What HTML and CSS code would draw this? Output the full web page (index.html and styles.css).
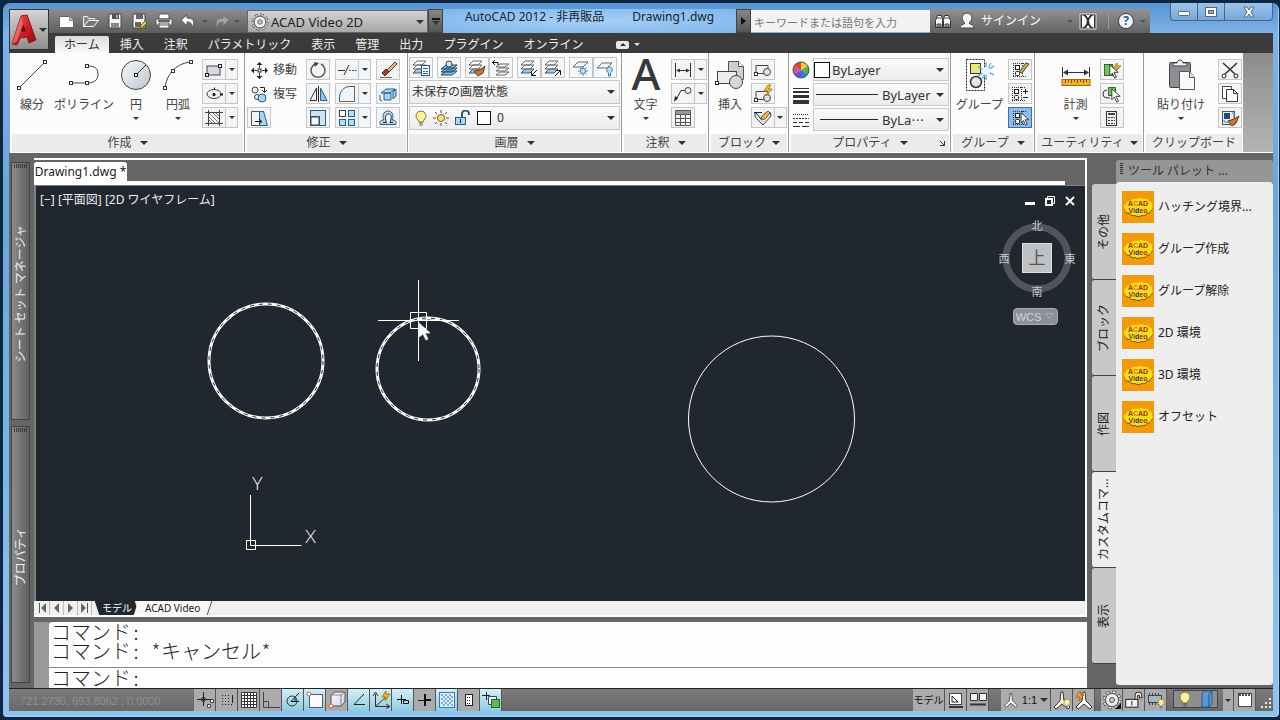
FILE: index.html
```html
<!DOCTYPE html>
<html lang="ja">
<head>
<meta charset="utf-8">
<title>AutoCAD 2012 - Drawing1.dwg</title>
<link rel="stylesheet" href="styles.css">
</head>
<body>
<svg class="defs" width="0" height="0" aria-hidden="true">
  <defs>
    <linearGradient id="gRed" x1="0" y1="0" x2="1" y2="1"><stop offset="0" stop-color="#f0605a"/><stop offset="0.5" stop-color="#d4202a"/><stop offset="1" stop-color="#8c0a12"/></linearGradient>
    <linearGradient id="gDisc" x1="0" y1="0" x2="1" y2="1"><stop offset="0" stop-color="#fafbfc"/><stop offset="1" stop-color="#bcc4cc"/></linearGradient>
    <linearGradient id="gCube" x1="0" y1="0" x2="1" y2="1"><stop offset="0" stop-color="#ffffff"/><stop offset="1" stop-color="#c9d3dc"/></linearGradient>
    <symbol id="tile" viewBox="0 0 32 32">
      <rect width="32" height="32" fill="#f39a0b"/>
      <path id="blob" d="M2 17q-1-3 2-4q0-3 4-3q2-3 7-2q4-2 7 0q4-1 5 2q4 1 3 4q2 3-1 5q-1 3-4 3q-2 3-5 2q-4 2-7 0q-4 1-5-2q-5 0-6-5z" fill="#7a5a00" transform="translate(0 1)"/>
      <path d="M2 17q-1-3 2-4q0-3 4-3q2-3 7-2q4-2 7 0q4-1 5 2q4 1 3 4q2 3-1 5q-1 3-4 3q-2 3-5 2q-4 2-7 0q-4 1-5-2q-5 0-6-5z" fill="#f8dc14"/>
      <text x="16" y="15" class="tile-text" fill="#a0301c">A<tspan fill="#d8782a">C</tspan>AD</text>
      <text x="16" y="22" class="tile-text" fill="#a02c2c">V<tspan fill="#4a6a30">i</tspan><tspan fill="#28286c">d</tspan>eo</text>
    </symbol>
    <symbol id="bulb" viewBox="0 0 16 16"><path d="M8 1a5 5 0 0 1 3 9l-1 2H6l-1-2a5 5 0 0 1 3-9z" fill="#fff0a0" stroke="#8a7430"/><path d="M6 13h4M6.500 15h3" stroke="#555"/></symbol>
    <symbol id="lock" viewBox="0 0 18 16"><path d="M10 7V4a3 3 0 0 1 6 0v2h-2V4.500a1 1 0 0 0-2 0V7" fill="#fff" stroke="#333"/><rect x="1.500" y="7.500" width="11" height="7" fill="#f4f4f4" stroke="#333"/><path d="M7 9v4" stroke="#333"/></symbol>
    <symbol id="layers" viewBox="0 0 24 20"><path d="M4 7l4-4h9l-4 4zM4 11l4-4h9l-4 4z" fill="#fff" stroke="#666"/><path d="M4 15l4-4h9l-4 4z" fill="#9cc8e6" stroke="#456"/></symbol>
    <symbol id="scale" viewBox="0 0 20 20"><path d="M9 2h2l1 9 6 6-2 2-6-5-6 5-2-2 6-6z" fill="#fff" stroke="#333"/></symbol>
    <symbol id="gear" viewBox="0 0 20 20"><circle cx="10" cy="10" r="8" fill="none" stroke="#555" stroke-width="3" stroke-dasharray="3.600 2.680"/><circle cx="10" cy="10" r="8" fill="none" stroke="#eee" stroke-width="1.500" stroke-dasharray="2.400 3.880" stroke-dashoffset="-.6"/><circle cx="10" cy="10" r="6.500" fill="#f0f0f0" stroke="#555"/><circle cx="10" cy="10" r="2.500" fill="#ccc" stroke="#555"/></symbol>
    <symbol id="cursor" viewBox="0 0 12 18"><path d="M1 1v13l3-3 3 6 2-1-3-6h5z" fill="#fff" stroke="#222"/></symbol>
    <symbol id="blockpair" viewBox="0 0 24 20"><path d="M5 5.500h12v8H5z" fill="#f4f4f4" stroke="#444"/><rect x="3.500" y="12.500" width="3" height="3" fill="#fff" stroke="#333"/><circle cx="16" cy="12" r="3.500" fill="#dde1e4" stroke="#444"/></symbol>
    <symbol id="group" viewBox="0 0 24 20"><path d="M5 3.500h13M5 16.500h13M5.500 3v14M14.500 3v14" fill="none" stroke="#333" stroke-dasharray="1 1"/><rect x="7.500" y="5.500" width="4" height="4" fill="#fff" stroke="#222"/><rect x="7.500" y="11.500" width="4" height="4" rx="1" fill="#fff" stroke="#222"/></symbol>
  </defs>
</svg>

<div class="window">
  <header class="header">
    <button class="app-btn" aria-label="アプリケーション メニュー">
      <svg width="26" height="36" viewBox="0 0 26 36"><path d="M10 4l6-1 9 25-7 3-2-6-7 1-3 7-5-1z" fill="url(#gRed)" stroke="#9c1018"/><path d="M12 12l3 7-5 1z" fill="#6c0a10"/><path d="M10 4L1 32l5-3 6-17z" fill="#f58a84" opacity=".6"/></svg>
      <i class="dn"></i>
    </button>
    <div class="titlebar">
      <div class="qat">
        <button aria-label="新規"><svg width="20" height="18"><path d="M2.500 4.500h10l4 4v7h-14z" fill="#fff" stroke="#666"/><path d="M12.500 4.500v4h4" fill="#ccc" stroke="#888"/></svg></button>
        <button aria-label="開く"><svg width="20" height="18"><path d="M2.500 14.500v-10h4l1 2h6v2" fill="#888" stroke="#eee"/><path d="M2.500 14.500l5-6h10l-5 6z" fill="#777" stroke="#fff"/></svg></button>
        <button aria-label="上書き保存"><svg width="20" height="18"><path d="M4 2h12v14H4z" fill="#f4f4f4" stroke="#444"/><path d="M7 2h7v5H7z" fill="#555"/><path d="M6 11h8v5H6z" fill="#888"/><path d="M12 3v3" stroke="#fff"/></svg></button>
        <button aria-label="名前を付けて保存"><svg width="20" height="18"><path d="M4 2h12v14H4z" fill="#f4f4f4" stroke="#444"/><path d="M7 2h7v5H7zM6 10h6v5H6z" fill="#666"/><path d="M11 17l1-4 4-4 2 2-4 4z" fill="#f2cc40" stroke="#705810"/></svg></button>
        <button aria-label="印刷"><svg width="22" height="18"><path d="M6 2h10v5H6zM3 7h16v6H3zM6 11h10v5H6z" fill="#fff" stroke="#555"/><path d="M5 9h12" stroke="#666" stroke-width="2"/></svg></button>
        <button aria-label="元に戻す"><svg width="20" height="18"><path d="M2 8l6-5v3c6 0 8 3 6 10-1-4-2-6-6-6v4z" fill="#fff" stroke="#555"/></svg></button>
        <i class="dn sm"></i>
        <button aria-label="やり直し"><svg width="20" height="18"><path d="M18 8l-6-5v3c-6 0-8 3-6 10 1-4 2-6 6-6v4z" fill="#a4a4a4" stroke="#777"/></svg></button>
        <i class="dn sm"></i>
      </div>
      <div class="workspace">
        <svg width="18" height="18"><use href="#gear"/></svg>
        <select aria-label="ワークスペース"><option>ACAD Video 2D</option></select>
        <i class="dn"></i>
      </div>
      <button class="qat-more" aria-label="カスタマイズ"><i class="bar"></i><i class="dn dark"></i></button>
      <h1 class="title"><span>AutoCAD 2012 - 非再販品</span><span>Drawing1.dwg</span></h1>
      <button class="qat-more" aria-label="検索を表示"><i class="rt"></i></button>
      <input class="search" type="text" aria-label="検索" placeholder="キーワードまたは語句を入力">
      <div class="info">
        <button aria-label="検索"><svg width="18" height="18"><path d="M3.500 3.500h4l1 5v7h-7v-7zM10.500 3.500h4l2 5v7h-7v-7z" fill="#fff" stroke="#333"/><path d="M3 6h4M11 6h4M3 12h4v3H3zM11 12h4v3h-4z" fill="#999" stroke="#444"/></svg></button>
        <button class="signin"><svg width="18" height="18"><path d="M2 16c0-4 4-3 5-5-5-4-3-10 2-10s7 6 2 10c1 2 5 1 5 5z" fill="#f4f4f4" stroke="#444"/></svg>サインイン</button>
        <i class="dn sm"></i>
        <button aria-label="Exchange"><svg width="18" height="18"><rect x="1" y="2" width="16" height="15" fill="#333" stroke="#ddd"/><path d="M3 3c7 3 6 10 0 13zM15 3c-7 3-6 10 0 13zM7 3h4L9 6zM7 16h4l-2-3z" fill="#fff"/></svg></button>
        <i class="split"></i>
        <button aria-label="ヘルプ" class="help">?</button>
        <i class="dn sm"></i>
      </div>
      <div class="winbtns">
        <button aria-label="最小化"><svg width="12" height="12"><rect x=".5" y="5.500" width="11" height="4" rx="1" fill="#fff" stroke="#54687e"/></svg></button>
        <button aria-label="元のサイズに戻す"><svg width="12" height="12"><rect x=".5" y="1.500" width="11" height="9" fill="#fff" stroke="#54687e"/><rect x="3.500" y="4.500" width="5" height="3" fill="#8ab0d8" stroke="#54687e"/></svg></button>
        <button aria-label="閉じる"><svg width="14" height="12"><path d="M2 1h3l2 3 2-3h3L9 6l3 5H9L7 8l-2 3H2l3-5z" fill="#fff" stroke="#54687e"/></svg></button>
      </div>
    </div>
    <nav class="tabs">
      <button class="active">ホーム</button><button>挿入</button><button>注釈</button><button>パラメトリック</button><button>表示</button><button>管理</button><button>出力</button><button>プラグイン</button><button>オンライン</button>
      <span class="collapse"><svg width="14" height="9"><rect width="13" height="8" y="1" rx="2" fill="#e8e8e8"/><path d="M4 6l3-3 3 3z" fill="#333"/></svg><i class="dn sm light"></i></span>
    </nav>
  </header>

  <main class="ribbon">
    <section class="panel p-draw">
      <div class="pbody">
        <button class="big w40"><svg width="32" height="32"><path d="M3 29L29 3" stroke="#444"/><g fill="#fff" stroke="#333"><rect x="1.500" y="27.500" width="3" height="3"/><rect x="27.500" y="1.500" width="3" height="3"/></g></svg><span>線分</span></button>
        <button class="big w64"><svg width="32" height="32"><path d="M3 24h16c6 0 11-2 11-9s-5-8-11-8" fill="none" stroke="#444"/><g fill="#fff" stroke="#333"><rect x="1.500" y="22.500" width="3" height="3"/><rect x="17.500" y="22.500" width="3" height="3"/><rect x="17.500" y="5.500" width="3" height="3"/></g></svg><span>ポリライン</span></button>
        <button class="big w40"><svg width="32" height="32"><circle cx="16" cy="16" r="14.500" fill="url(#gDisc)" stroke="#444"/><path d="M16 16L26 6" stroke="#333"/><rect x="14.500" y="14.500" width="3" height="3" fill="#fff" stroke="#222"/></svg><span>円</span><i class="dn sm dark"></i></button>
        <button class="big w44"><svg width="32" height="32"><path d="M3 29C4 17 13 4 29 3" fill="none" stroke="#444"/><g fill="#fff" stroke="#333"><rect x="1.500" y="27.500" width="3" height="3"/><rect x="9.500" y="10.500" width="3" height="3"/><rect x="27.500" y="1.500" width="3" height="3"/></g></svg><span>円弧</span><i class="dn sm dark"></i></button>
        <div class="col">
          <button class="ib sp" aria-label="長方形"><svg width="24" height="20"><rect x="5" y="6" width="13" height="9" fill="#d7dbdf" stroke="#444"/><g fill="#fff" stroke="#222"><rect x="3.500" y="13.500" width="3" height="3"/><rect x="16.500" y="4.500" width="3" height="3"/></g></svg><i class="dn sm dark"></i></button>
          <button class="ib sp" aria-label="楕円"><svg width="24" height="20"><ellipse cx="12" cy="10" rx="7" ry="4.500" fill="#eceeef" stroke="#444"/><path d="M10.500 10.500h3M12 9v3M18 10.500h3M12 4.500h1" stroke="#222" stroke-width="2"/></svg><i class="dn sm dark"></i></button>
          <button class="ib sp" aria-label="ハッチング"><svg width="24" height="20"><path d="M6.500 2v16M17.500 2v16M3 4.500h18M3 15.500h18" stroke="#444"/><path d="M7 9l6 6M7 5l10 10M11 5l6 6M14 5l3 3M7 12l3 3" stroke="#777"/></svg><i class="dn sm dark"></i></button>
        </div>
      </div>
      <footer>作成 <i class="dn dark"></i></footer>
    </section>

    <section class="panel p-modify">
      <div class="pbody mgrid">
        <button class="txt"><svg width="20" height="20"><path d="M10.500 4v4M10.500 13v4M4 10.500h4M13 10.500h4" stroke="#333"/><path d="M10.500 2l3 3h-6zM10.500 19l3-3h-6zM2 10.500l3-3v6zM19 10.500l-3-3v6z" fill="#222"/><rect x="9" y="9" width="3" height="3" fill="#fff" stroke="#222"/></svg>移動</button>
        <button class="ib" aria-label="回転"><svg width="24" height="20"><path d="M9 4a7 7 0 1 0 6 0" fill="none" stroke="#555" stroke-width="1.500"/><path d="M8 2l5 1-4 4z" fill="#444"/></svg></button>
        <button class="ib sp" aria-label="トリム"><svg width="24" height="20"><path d="M3 10.500h7M9 15l5-10" stroke="#333"/><path d="M14 10.500h8" stroke="#2a6a9c" stroke-dasharray="2 1"/></svg><i class="dn sm dark"></i></button>
        <button class="ib" aria-label="削除"><svg width="24" height="20"><path d="M11 10l8-8 2 2-8 8z" fill="#e8b878" stroke="#444"/><path d="M6 13l4-4 3 3-4 4z" fill="#b43a2c" stroke="#522"/><path d="M4 17.500h12" stroke="#666"/></svg></button>

        <button class="txt"><svg width="20" height="20"><circle cx="6" cy="6" r="3" fill="#eee" stroke="#444"/><circle cx="8" cy="13" r="2.500" fill="#eee" stroke="#444"/><circle cx="13" cy="14" r="4" fill="#a8d4f0" stroke="#23608e"/><path d="M11 3.500h4.500V8M13 6l2.500 2.500L18 6" fill="none" stroke="#222"/></svg>複写</button>
        <button class="ib" aria-label="鏡像"><svg width="24" height="20"><path d="M10.500 4v12.500H4z" fill="#eee" stroke="#333"/><path d="M14.500 4v12.500H21z" fill="#8cc4ec" stroke="#23608e"/><path d="M12.500 2v16" stroke="#222"/></svg></button>
        <button class="ib sp" aria-label="フィレット"><svg width="24" height="20"><path d="M4 17.500V13C5 7 9 3 14 2.500h5.500v15z" fill="#eef6fb"/><path d="M4.500 18v-5C5 7 9 3 14 2.500h6" stroke="#23608e" fill="none"/><path d="M4 17.500h15.500V2" stroke="#666" fill="none"/></svg><i class="dn sm dark"></i></button>
        <button class="ib" aria-label="分解"><svg width="24" height="20"><path d="M5 9l5-4h9l-5 4zM8 9h7v7H8zM17 8l3-3v7l-3 3z" fill="#a8d4f0" stroke="#23608e"/><path d="M4 11v5l2 1" fill="none" stroke="#23608e"/></svg></button>

        <button class="ib" aria-label="ストレッチ"><svg width="24" height="20"><path d="M4.500 3.500h8v14h-8z" fill="#f4f4f4" stroke="#555"/><path d="M12.500 3.500h4l4 14h-8z" fill="#a8d4f0" stroke="#23608e"/><path d="M8 13.500h6M12 11l3 2.500-3 2.500" stroke="#111" fill="none"/></svg></button>
        <button class="ib" aria-label="尺度変更"><svg width="24" height="20"><rect x="4.500" y="2.500" width="15" height="15" fill="#cbe4f5" stroke="#23608e"/><path d="M5 8.500h8.500V17" stroke="#23608e" fill="none"/><rect x="5" y="9" width="8" height="8" fill="#f5f5f5" stroke="#444"/></svg></button>
        <button class="ib sp" aria-label="配列複写"><svg width="24" height="20"><g fill="#b8dcf4" stroke="#23608e"><rect x="13.500" y="2.500" width="6" height="6"/><rect x="4.500" y="11.500" width="6" height="6"/><rect x="13.500" y="11.500" width="6" height="6"/></g><rect x="4.500" y="2.500" width="6" height="6" fill="#fff" stroke="#444"/></svg><i class="dn sm dark"></i></button>
        <button class="ib" aria-label="オフセット"><svg width="24" height="20"><path d="M4 16.500h16v-2c0-2-2-2.500-4-2.500 2-3 1-9-4-9s-6 6-4 9c-2 0-4 .5-4 2.500z" fill="#b8dcf4" stroke="#23608e"/><path d="M7 14.500h3.500c-2-5-1-8.500 2-8.500s3.500 3.500 1.500 8.500h3" fill="#fff" stroke="#222"/></svg></button>
      </div>
      <footer>修正 <i class="dn dark"></i></footer>
    </section>

    <section class="panel p-layer">
      <div class="pbody stack">
        <div class="lrow">
          <button class="ib" aria-label="画層プロパティ管理"><svg width="24" height="20"><use href="#layers"/><rect x="12.500" y="7.500" width="8" height="10" fill="#fff" stroke="#1c5a9a"/><path d="M14 10.500h5M14 13.500h2M17 13.500h2M14 15.500h5" stroke="#1c5a9a"/></svg></button>
          <button class="ib" aria-label="現在層に設定"><svg width="24" height="20"><path d="M4 11l5-4h11l-5 4zM4 14l5-4h11l-5 4zM4 17l5-4h11l-5 4z" fill="#7fc0e0" stroke="#246"/><circle cx="12" cy="6" r="3" fill="#d0e4ee" stroke="#345"/></svg></button>
          <span class="pair"><button class="ib" aria-label="一致"><svg width="24" height="20"><use href="#layers"/><path d="M9 13l6-1 5-4-2 7-5 3z" fill="#c87a30" stroke="#643a10"/></svg></button><button class="ib" aria-label="前の画層"><svg width="24" height="20"><g transform="translate(3 2)"><path d="M4 7l4-3h9l-4 3zM4 11l4-3h9l-4 3zM4 15l4-3h9l-4 3z" fill="#f6f6f6" stroke="#666"/></g><path d="M3 4.500h6V7M6 2L3.500 4.500 6 7" stroke="#111" fill="none"/></svg></button></span>
          <span class="pair"><button class="ib" aria-label="画層選択表示"><svg width="24" height="20"><use href="#layers"/><path d="M20 12l-5 5M14.500 13v4.500H19" stroke="#111" fill="none"/></svg></button><button class="ib" aria-label="画層選択表示解除"><svg width="24" height="20"><use href="#layers"/><path d="M14 18l5-5M15 12.500h4.500V17" stroke="#111" fill="none"/></svg></button></span>
          <span class="pair"><button class="ib" aria-label="フリーズ"><svg width="24" height="20"><path d="M4 9l5-5h10l-5 5z" fill="#f6f6f6" stroke="#666"/><path d="M14 8v10M9 13h10M10.500 9.500l7 7M17.500 9.500l-7 7" stroke="#3a8aca"/><circle cx="14" cy="13" r="2.500" fill="#d4e9f8" stroke="#3a8aca"/></svg></button><button class="ib" aria-label="非表示"><svg width="24" height="20"><path d="M4 10l5-5h10l-5 5z" fill="#f6f6f6" stroke="#666"/><path d="M15.500 18v-3c-3-2-2-6 1-6s4 4 1 6v3z" fill="#b8dcf4" stroke="#3a7aaa"/></svg></button></span>
        </div>
        <div class="combo"><select aria-label="画層状態"><option>未保存の画層状態</option></select><i class="dn dark"></i></div>
        <div class="combo layer"><svg width="16" height="16"><use href="#bulb"/></svg><svg width="18" height="16"><circle cx="9" cy="8" r="3.500" fill="#ffe070" stroke="#776020"/><path d="M9 0v3M9 13v3M1 8h3M14 8h3M3 2l2 2M13 12l2 2M15 2l-2 2M3 14l2-2" stroke="#665020"/></svg><svg width="18" height="16"><path d="M9 7V4a3 3 0 0 1 7 0v1" fill="none" stroke="#245a7c" stroke-width="2"/><rect x="2.500" y="7.500" width="10" height="7" fill="#a6daf4" stroke="#245a7c"/><path d="M7.500 9v4" stroke="#222"/></svg><i class="sw"></i><select aria-label="画層"><option>0</option></select><i class="dn dark"></i></div>
      </div>
      <footer>画層 <i class="dn dark"></i></footer>
    </section>

    <section class="panel p-annot">
      <div class="pbody">
        <button class="big w48"><svg width="32" height="32"><text x="16" y="31" class="big-a">A</text></svg><span>文字</span><i class="dn sm dark"></i></button>
        <div class="col">
          <button class="ib sp" aria-label="寸法"><svg width="24" height="20"><path d="M4.500 3v14M19.500 3v14M6 10.500h12" stroke="#333"/><path d="M5 10.500l4-2v4zM19 10.500l-4-2v4z" fill="#333"/></svg><i class="dn sm dark"></i></button>
          <button class="ib sp" aria-label="引出線"><svg width="24" height="20"><path d="M5 16L10 6.500h4" stroke="#333" fill="none"/><path d="M3 18l1-6 3 2z" fill="#222"/><circle cx="17" cy="6.500" r="3" fill="#eee" stroke="#444"/></svg><i class="dn sm dark"></i></button>
          <button class="ib" aria-label="表"><svg width="24" height="20"><path d="M4.500 2.500h15v15h-15zM4 6.500h16M4 10.500h16M4 14.500h16M9.500 6v12M14.500 6v12" fill="#f6f6f6" stroke="#555"/><path d="M5 3h14v3H5z" fill="#999"/></svg></button>
        </div>
      </div>
      <footer>注釈 <i class="dn dark"></i></footer>
    </section>

    <section class="panel p-block">
      <div class="pbody">
        <button class="big w40"><svg width="32" height="32"><path d="M14.500 2.500h10l5 5v13h-15z" fill="#ccd0d4" stroke="#555"/><path d="M24.500 2.500v5h5" fill="#fff" stroke="#555"/><rect x="3.500" y="12.500" width="19" height="12" fill="#eceeef" stroke="#444"/><circle cx="22" cy="23" r="6.500" fill="#d4d8dc" stroke="#444"/><rect x="1.500" y="22.500" width="3" height="3" fill="#fff" stroke="#222"/></svg><span>挿入</span></button>
        <div class="col">
          <button class="ib" aria-label="ブロック作成"><svg width="24" height="20"><use href="#blockpair"/></svg></button>
          <button class="ib" aria-label="ブロック編集"><svg width="24" height="20"><use href="#blockpair" y="2"/><path d="M17 1l-4 6h4l-2 5 6-7h-4l3-4z" fill="#f8c430" stroke="#b07a10"/></svg></button>
          <button class="ib sp" aria-label="属性編集"><svg width="24" height="20"><path d="M4 5v4l8 8 8-9-1-4" fill="#e4f0f6" stroke="#345"/><path d="M3 4.500h8M5 5l6 7" stroke="#222"/><path d="M10 12l1-4 6-5 2 2-5 6z" fill="#f2b840" stroke="#654"/></svg><i class="dn sm dark"></i></button>
        </div>
      </div>
      <footer>ブロック <i class="dn dark"></i></footer>
    </section>

    <section class="panel p-props">
      <div class="pbody stack">
        <div class="prow"><svg width="20" height="20"><path d="M10 10V2a8 8 0 0 1 7 4z" fill="#f0c838"/><path d="M10 10L17 6a8 8 0 0 1 0 8z" fill="#58b040"/><path d="M10 10l7 4a8 8 0 0 1-7 4z" fill="#3080d0"/><path d="M10 10v8a8 8 0 0 1-7-4z" fill="#6a50c8"/><path d="M10 10L3 14a8 8 0 0 1 0-8z" fill="#d84a9a"/><path d="M10 10L3 6a8 8 0 0 1 7-4z" fill="#e04030"/><circle cx="10" cy="10" r="8" fill="none" stroke="#555"/></svg><div class="combo color"><i class="sw"></i><select aria-label="オブジェクトの色"><option>ByLayer</option></select><i class="dn dark"></i></div></div>
        <div class="prow"><svg width="20" height="20"><path d="M2 3.500h16" stroke="#333"/><path d="M2 7h16" stroke="#333" stroke-width="2"/><path d="M2 11.500h16" stroke="#333" stroke-width="3"/><path d="M2 17h16" stroke="#333" stroke-width="4"/></svg><div class="combo"><i class="ln long"></i><select aria-label="線の太さ"><option>ByLayer</option></select><i class="dn dark"></i></div></div>
        <div class="prow"><svg width="20" height="20"><path d="M2 4.500h16" stroke="#333" stroke-dasharray="1 1"/><path d="M2 8.500h16" stroke="#333" stroke-dasharray="2 1"/><path d="M2 12.500h16" stroke="#333" stroke-dasharray="4 2"/><path d="M2 16.500h16" stroke="#333" stroke-dasharray="7 2"/></svg><div class="combo"><i class="ln"></i><select aria-label="線種"><option>ByLa⋯</option></select><i class="dn dark"></i></div></div>
      </div>
      <footer>プロパティ <i class="dn dark"></i><svg class="launch" width="7" height="7"><path d="M1 1l4 4M5.500 1v4.500H1" stroke="#333" fill="none"/></svg></footer>
    </section>

    <section class="panel p-group">
      <div class="pbody">
        <button class="big w54"><svg width="36" height="32" viewBox="0 0 36 32"><path d="M4.500.500h18v31h-18z" fill="none" stroke="#222" stroke-dasharray="2 1"/><rect x="8.500" y="4.500" width="10" height="10" fill="#e8e878" stroke="#333"/><circle cx="14" cy="23" r="5.500" fill="#e4e8ec" stroke="#333" stroke-width="1.500"/><path d="M24 3v18M16 8l16 8M16 17l16-10M20 20l9-16" stroke="#68b4ec" stroke-width="1.500"/><circle cx="24" cy="12" r="4" fill="#e8f6ff"/></svg><span>グループ</span></button>
        <div class="col">
          <button class="ib" aria-label="グループ編集"><svg width="24" height="20"><use href="#group"/><path d="M11 12l7-9 3 1-7 9z" fill="#c8b050" stroke="#543"/></svg></button>
          <button class="ib" aria-label="グループ追加"><svg width="24" height="20"><use href="#group" x="-1"/><path d="M15 7.500h5M17.500 5v5M15 13.500h5" stroke="#222"/></svg></button>
          <button class="ib on" aria-label="グループ選択"><svg width="24" height="20"><use href="#group"/><use href="#cursor" x="12" y="4" width="10" height="14"/></svg></button>
        </div>
      </div>
      <footer>グループ <i class="dn dark"></i></footer>
    </section>

    <section class="panel p-util">
      <div class="pbody">
        <button class="big w62"><svg width="32" height="32"><path d="M2.500 8v10M29.500 8v10M4 13.500h24" stroke="#333"/><path d="M3 13.500l5-3v6zM29 13.500l-5-3v6z" fill="#333"/><rect x="2" y="20.500" width="28" height="6" fill="#f0b428" stroke="#a06a10"/><path d="M5.500 21v3M8.500 21v2M11.500 21v3M14.500 21v2M17.500 21v3M20.500 21v2M23.500 21v3M26.500 21v2" stroke="#805008"/></svg><span>計測</span><i class="dn sm dark"></i></button>
        <div class="col">
          <button class="ib" aria-label="クイック選択"><svg width="24" height="20"><rect x="4.500" y="4.500" width="8" height="11" fill="#78c060" stroke="#2c6a20"/><path d="M17 3l-4 5h4l-2 4 6-6h-4z" fill="#f8b430" stroke="#b07a10"/><use href="#cursor" x="9" y="4" width="10" height="15"/></svg></button>
          <button class="ib" aria-label="選択"><svg width="24" height="20"><path d="M7 6a4 4 0 0 0 0 8h3" fill="none" stroke="#333"/><path d="M8.500 3.500h7v8h-7z" fill="#78c060" stroke="#2c6a20"/><use href="#cursor" x="11" y="4" width="10" height="15"/></svg></button>
          <button class="ib" aria-label="計算機"><svg width="24" height="20"><rect x="6.500" y="3.500" width="10" height="14" fill="#eee" stroke="#333"/><path d="M8 6h7" stroke="#444" stroke-width="2"/><path d="M8 9.500h7M8 12.500h7M8 15.500h7" stroke="#333" stroke-dasharray="2 1"/></svg></button>
        </div>
      </div>
      <footer>ユーティリティ <i class="dn dark"></i></footer>
    </section>

    <section class="panel p-clip">
      <div class="pbody">
        <button class="big w68"><svg width="32" height="32"><rect x="4.500" y="3.500" width="21" height="25" rx="1" fill="#8c9094" stroke="#444"/><path d="M8 7h14V4h-4c0-4-6-4-6 0H8z" fill="#eee" stroke="#444"/><path d="M14.500 12.500h10l5 6v12h-15z" fill="#fafafa" stroke="#555"/><path d="M24.500 12.500v6h5" fill="#ddd" stroke="#555"/></svg><span>貼り付け</span><i class="dn sm dark"></i></button>
        <div class="col">
          <button class="ib" aria-label="切り取り"><svg width="24" height="20"><path d="M5 3l12 11M19 3L7 14" stroke="#333" stroke-width="1.500"/><circle cx="6" cy="16" r="2" fill="#fff" stroke="#222"/><circle cx="18" cy="16" r="2" fill="#fff" stroke="#222"/></svg></button>
          <button class="ib" aria-label="コピー"><svg width="24" height="20"><path d="M4.500 2.500h9v12h-9z" fill="#fff" stroke="#444"/><path d="M8.500 5.500h7l4 4v8h-11zM15.500 5.500v4h4" fill="#fff" stroke="#333"/></svg></button>
          <button class="ib" aria-label="プロパティコピー"><svg width="24" height="20"><rect x="4.500" y="3.500" width="12" height="13" fill="#eee" stroke="#456"/><path d="M6 5h6v6H6z" fill="#1c4a90"/><path d="M14 5h2v9H6v-2" fill="none" stroke="#58a"/><path d="M10 13l6-2 5-3-3 7-4 3z" fill="#c87a30" stroke="#643a10"/></svg></button>
        </div>
      </div>
      <footer>クリップボード</footer>
    </section>
    <div class="rest"></div>
  </main>

  <div class="work">
    <aside class="dock">
      <div class="docked"><i class="grip"></i><span>シート セット マネージャ</span></div>
      <div class="docked"><i class="grip"></i><span>プロパティ</span></div>
    </aside>

    <div class="center">
      <div class="doc">
        <div class="filetabs"><button>Drawing1.dwg *</button></div>
        <div class="canvas">
          <svg class="drawing" width="100%" height="100%">
            <g fill="none" stroke="#fff">
              <g stroke-width="3"><circle cx="230" cy="175" r="57"/><circle cx="392" cy="183" r="51"/></g>
              <g stroke="#20272e" stroke-dasharray="4 5"><circle cx="230" cy="175" r="57"/><circle cx="392" cy="183" r="51"/></g>
              <circle cx="735.500" cy="233" r="83"/>
              <path d="M342 134.500h81M382.500 94v81M374.500 126.500h16v16h-16z"/>
              <path d="M214.500 309v50.500h51M210.500 354.500h9v9h-9z"/>
            </g>
            <text x="269" y="357" class="ucs">X</text><text x="216" y="304" class="ucs">Y</text>
            <path d="M383 137v14l4-3 3 6 2-1-3-6h5z" fill="#fff" stroke="#dfe3e6"/>
          </svg>
          <div class="viewlabel">[−] [平面図] [2D ワイヤフレーム]</div>
          <div class="viewtools">
            <div class="mdi">
              <button aria-label="最小化"><svg width="12" height="12"><path d="M1 8.500h10" stroke="#fff" stroke-width="3"/></svg></button>
              <button aria-label="元のサイズ"><svg width="12" height="12"><path d="M3.500 3V1.500h7v7H9" fill="none" stroke="#fff"/><rect x="2" y="4" width="6" height="6" fill="none" stroke="#fff" stroke-width="2"/></svg></button>
              <button aria-label="閉じる"><svg width="12" height="12"><path d="M2 2l8 8M10 2l-8 8" stroke="#fff" stroke-width="2"/></svg></button>
            </div>
            <svg width="80" height="80" class="cube">
              <circle cx="40" cy="40" r="31" fill="none" stroke="#50555c" stroke-width="7"/>
              <rect x="25.500" y="25.500" width="29" height="29" fill="#bfc0c2" stroke="#e0e0e0"/>
              <text x="40" y="46" class="top">上</text>
              <text x="40" y="12">北</text><text x="40" y="78">南</text><text x="7" y="45">西</text><text x="73" y="45">東</text>
            </svg>
            <button class="wcs">WCS <svg width="9" height="7"><path d="M.500.500h8l-4 5z" fill="none" stroke="#a8acb4"/></svg></button>
          </div>
        </div>
        <div class="layouts">
          <button aria-label="最初"><svg width="13" height="12"><path d="M3.500 1v10" stroke="#555"/><path d="M10 1v10L5 6z" fill="#666"/></svg></button><button aria-label="前"><svg width="13" height="12"><path d="M9 1v10L4 6z" fill="#666"/></svg></button><button aria-label="次"><svg width="13" height="12"><path d="M4 1v10l5-5z" fill="#666"/></svg></button><button aria-label="最後"><svg width="13" height="12"><path d="M9.500 1v10" stroke="#555"/><path d="M3 1v10l5-5z" fill="#666"/></svg></button>
          <button class="lt model"><span>モデル</span></button><button class="lt sheet"><span>ACAD Video</span></button>
        </div>
      </div>
      <div class="cmd">
        <div class="cmdgrip"><i class="grip"></i></div>
        <div class="cmdtext">
          <div class="hist"><p>コマンド:</p><p>コマンド: *キャンセル*</p></div>
          <label class="prompt">コマンド:<input type="text" aria-label="コマンド入力"></label>
        </div>
      </div>
    </div>

    <aside class="palette">
      <nav class="ptabs"><button>その他</button><button>ブロック</button><button>作図</button><button class="active">カスタムコマ...</button><button>表示</button></nav>
      <div class="pmain">
        <h2><i class="vgrip"></i>ツール パレット ...</h2>
        <div class="plist">
          <button><svg width="32" height="32"><use href="#tile"/></svg>ハッチング境界...</button>
          <button><svg width="32" height="32"><use href="#tile"/></svg>グループ作成</button>
          <button><svg width="32" height="32"><use href="#tile"/></svg>グループ解除</button>
          <button><svg width="32" height="32"><use href="#tile"/></svg>2D 環境</button>
          <button><svg width="32" height="32"><use href="#tile"/></svg>3D 環境</button>
          <button><svg width="32" height="32"><use href="#tile"/></svg>オフセット</button>
        </div>
      </div>
    </aside>
  </div>

  <footer class="status">
    <output class="coords">721.2730, 693.8062 , 0.0000</output>
    <div class="sgroup">
      <button aria-label="推定拘束"><svg width="20" height="20"><path d="M2 9.500h14M8.500 2v14" stroke="#222"/><circle cx="8.500" cy="9.500" r="2" fill="none" stroke="#222"/><path d="M12.500 14.500h3v3h-3zM15.500 9.500h3v3h-3z" fill="#eee" stroke="#444"/></svg></button>
      <button aria-label="スナップ"><svg width="20" height="20"><path d="M5 5.500h8M5 8.500h8M5 11.500h8M5 14.500h10" stroke="#222" stroke-dasharray="1 2"/><path d="M15.500 5v8" stroke="#222"/></svg></button>
      <button aria-label="グリッド"><svg width="20" height="20"><path d="M2.500 2.500h15v15h-15zM2 5.500h16M2 8.500h16M2 11.500h16M2 14.500h16M5.500 2v16M8.500 2v16M11.500 2v16M14.500 2v16" fill="#fff" stroke="#333"/></svg></button>
      <button aria-label="直交"><svg width="20" height="20"><path d="M2.500 2v15.500H19M2 11.500h5.500V17" fill="none" stroke="#444"/></svg></button>
      <button class="on" aria-label="極"><svg width="20" height="20"><circle cx="9" cy="11" r="5" fill="none" stroke="#333"/><path d="M16 3L8 11.500h8M12 8v4" fill="none" stroke="#111"/></svg></button>
      <button class="on" aria-label="Oスナップ"><svg width="20" height="20"><rect x="4.500" y="4.500" width="13" height="13" fill="#f8fbff" stroke="#557"/><circle cx="4" cy="4" r="2" fill="#fff" stroke="#d06030"/></svg></button>
      <button aria-label="3Dスナップ"><svg width="20" height="20"><path d="M4 5l4-3h10v10l-4 4H4z" fill="url(#gCube)" stroke="#555"/><path d="M4 5h10v11M14 5l4-3" fill="none" stroke="#888"/><circle cx="4" cy="16" r="2" fill="#fff" stroke="#d05020"/></svg></button>
      <button class="on" aria-label="Oトラック"><svg width="20" height="20"><path d="M15 4L5 14.500h11" fill="none" stroke="#222"/></svg></button>
      <button class="on" aria-label="ダイナミックUCS"><svg width="20" height="20"><path d="M4.500 4v12.500H18M4 17L15 7M2 6l2.500-4L7 6M15 14l4 2.500-4 2" fill="none" stroke="#333"/><path d="M15 1l-4 6h4l-1 4 5-7h-4z" fill="#f8b430" stroke="#b07a10"/></svg></button>
      <button class="on" aria-label="ダイナミック入力"><svg width="20" height="20"><path d="M4 9.500h9M8.500 5v9M10.500 10.500h5v3h-5z" fill="none" stroke="#111"/></svg></button>
      <button aria-label="線の太さ"><svg width="20" height="20"><path d="M3 10.500h8" stroke="#222"/><path d="M9 10h7M10 4v12" stroke="#111" stroke-width="2"/></svg></button>
      <button class="on" aria-label="透過性"><svg width="20" height="20"><rect x="2.500" y="2.500" width="15" height="15" fill="#dff0ff" stroke="#3a78b8"/><path d="M4 5h12M4 9h12M4 13h12" stroke="#78b0e0" stroke-width="2" stroke-dasharray="2 2"/><path d="M6 7h11M6 11h11M6 15h11" stroke="#78b0e0" stroke-width="2" stroke-dasharray="2 2"/></svg></button>
      <button aria-label="クイックプロパティ"><svg width="20" height="20"><rect x="6.500" y="4.500" width="7" height="11" fill="#fff" stroke="#222"/><path d="M8 7.500h4M8 10.500h4M8 13.500h4" stroke="#222" stroke-dasharray="1 1"/></svg></button>
      <button class="on" aria-label="選択の循環"><svg width="20" height="20"><path d="M1 5.500h8M5.500 2v8" stroke="#222"/><path d="M7.500 6.500h8v8h-8z" fill="#fff" stroke="#345"/><rect x="10.500" y="9.500" width="8" height="8" fill="#60b850" stroke="#246a20"/></svg></button>
    </div>
    <div class="sgroup right">
      <button class="stext">モデル</button>
      <button aria-label="レイアウト"><svg width="20" height="20"><rect x="3.500" y="3.500" width="12" height="11" fill="#fff" stroke="#444"/><path d="M6 6v6h6z" fill="none" stroke="#222"/><path d="M3 17h14" stroke="#333" stroke-width="2"/></svg></button>
      <button aria-label="クイックビュー"><svg width="20" height="20"><path d="M2.500 3.500h7v7h-7zM11.500 3.500h7v7h-7z" fill="#f4f4f4" stroke="#333"/><path d="M2 14.500h16" stroke="#333" stroke-width="2"/></svg></button>
      <i class="gap10"></i>
      <button class="stext sc"><svg width="16" height="16"><use href="#scale"/></svg>1:1 <i class="dn dark"></i></button>
      <button aria-label="注釈表示"><svg width="20" height="20"><use href="#scale"/><use href="#bulb" x="10" y="8" width="10" height="11"/></svg></button>
      <button aria-label="自動尺度"><svg width="20" height="20"><use href="#scale"/><path d="M6 1L2 7h4l-1 4 5-6H7z" fill="#f8a430" stroke="#b06a10"/></svg></button>
      <i class="gap6"></i>
      <button aria-label="ワークスペース切り替え"><svg width="20" height="20"><use href="#gear"/><path d="M19 13v6h-6z" fill="#111"/></svg></button>
      <button aria-label="ロック"><svg width="20" height="18"><use href="#lock"/></svg></button>
      <button aria-label="ハードウェア"><svg width="20" height="20"><rect x="2.500" y="5.500" width="13" height="7" fill="#a8b4c0" stroke="#345"/><path d="M3 4h12M3 14h12" stroke="#345" stroke-width="2" stroke-dasharray="1 2"/><use href="#bulb" x="10" y="8" width="10" height="11"/></svg></button>
      <i class="gap6"></i>
      <span class="tray"><svg width="16" height="16"><use href="#bulb"/></svg><svg width="16" height="18"><path d="M4 4l2-3h8v13l-3 3H4z" fill="#5a9ad0" stroke="#2a5a8a"/><path d="M11 17V4l3-3" fill="none" stroke="#24507c"/></svg></span>
      <button class="narrow" aria-label="メニュー"><i class="dn sm dark"></i></button>
      <button aria-label="フルスクリーン"><svg width="20" height="20"><rect x="3.500" y="3.500" width="13" height="13" fill="#fff" stroke="#444"/><path d="M4 5h12" stroke="#555" stroke-width="2" stroke-dasharray="2 1"/></svg></button>
      <svg class="sizer" width="14" height="20"><path d="M10 7h2v2h-2zM6 11h2v2H6zM10 11h2v2h-2zM2 15h2v2H2zM6 15h2v2H6zM10 15h2v2h-2z" fill="#e8e8e8"/></svg>
    </div>
  </footer>
</div>
</body>
</html>
```
FILE: styles.css
```css
* { box-sizing: border-box; }
html, body { height: 100%; margin: 0; }
body {
  background: #0d2742;
  padding: 3px 1px 3px 3px;
  font: 12px/16px "Noto Sans", "Noto Sans CJK JP", sans-serif;
  color: #333;
  overflow: hidden;
}
.defs { position: absolute; }
svg { flex: none; display: block; }
button, select, input { font: inherit; color: inherit; margin: 0; padding: 0; border: 0; background: none; border-radius: 0; outline: 0; }
button { display: flex; align-items: center; justify-content: center; white-space: nowrap; }
select { appearance: none; flex: 1; min-width: 0; width: 0; }
p, h1, h2 { margin: 0; font: inherit; }

.window {
  height: 100%;
  display: flex;
  flex-direction: column;
  padding: 6px 5px 5px 6px;
  border-radius: 7px 7px 4px 4px;
  border: 1px solid #a9d2f2;
  border-width: 0 1px 1px 0;
  background: linear-gradient(#5794d4, #7fb2e6 30px, #6aa5da 200px, #8fc4ee);
}

.dn { display: inline-block; flex: none; border: 4px solid transparent; border-top: 4px solid #333; border-bottom: 0; }
.dn.sm { border-width: 3px 3px 0; border-top-color: #555; }
.dn.sm.dark { border-top-color: #333; }
.dn.sm.light { border-top-color: #ddd; }
.rt { border: 4px solid transparent; border-left: 5px solid #111; border-right: 0; }

/* header */
.header { display: grid; grid-template-columns: 40px 1fr; grid-template-rows: 24px 20px; flex: none; }
.app-btn { grid-row: 1 / 3; margin-bottom: 3px; background: linear-gradient(#d4d4d4, #8e8e8e); border: 1px solid #333; gap: 2px; z-index: 1; }
.header { background: linear-gradient(transparent 24px, #3b3b3b 24px); }
.titlebar { display: flex; min-width: 0; }
.qat { flex: none; width: 198px; display: flex; align-items: center; gap: 4px; padding: 0 6px 0 8px; background: linear-gradient(#8e8e8e, #5c5c5c); }
.qat .dn { margin: 0 -1px; }
.workspace { flex: none; width: 181px; height: 23px; margin-top: 1px; display: flex; align-items: center; padding: 0 3px; gap: 2px; background: linear-gradient(#d2d2d2, #a8a8a8); border: 1px solid #666; color: #222; font-size: 13px; }
.qat-more { flex: none; width: 15px; flex-direction: column; gap: 1px; background: linear-gradient(#888, #555); border: 1px solid #444; }
.bar { width: 8px; height: 2px; background: #111; }
.title { flex: 1; min-width: 0; display: flex; justify-content: center; gap: 28px; font-size: 12px; color: #182430; white-space: nowrap; line-height: 16px; background: radial-gradient(#a6d0f8, #7fb5ec); }
.search { flex: none; width: 179px; height: 22px; margin-top: 1px; background: #f2f2f2; padding: 2px 3px 0; font-size: 11px; color: #333; }
.search::placeholder { color: #777; opacity: 1; }
.info { flex: none; width: 220px; display: flex; align-items: center; background: linear-gradient(#929292, #626262); padding: 0 4px; gap: 6px; color: #fff; }
.signin { gap: 5px; flex: 1; justify-content: flex-start; }
.split { width: 1px; height: 16px; background: #999; margin: 0 3px 0 5px; }
.help { width: 16px; height: 16px; border-radius: 8px; background: #f4f6fa; border: 1px solid #345; color: #2456a0; font-weight: bold; }
.winbtns { flex: none; display: flex; height: 18px; margin: -6px 0 0 20px; border: 1px solid #41678f; border-top: 0; border-radius: 0 0 4px 4px; background: linear-gradient(#9cc4ea, #78a8d8); }
.winbtns button { width: 27px; border-right: 1px solid #41678f; }
.winbtns button:last-child { width: 47px; border: 0; }
.tabs { display: flex; align-items: stretch; background: #3b3b3b; color: #eee; padding: 3px 0 0 6px; }
.tabs button { padding: 0 10px; }
.tabs .active { padding: 0 9px; margin-right: 1px; background: linear-gradient(#dcdcdc, #fafafa); color: #333; border-radius: 2px 2px 0 0; }
.collapse { display: flex; align-items: center; gap: 4px; margin-left: 23px; }

/* ribbon */
.ribbon { flex: none; display: flex; border-bottom: 1px solid #fff; margin-left: 1px; background: #fcfcfc; }
.panel { flex: none; display: flex; flex-direction: column; padding: 0 1px 0 2px; border-right: 1px solid #999; }
.p-draw { width: 235px; }
.p-modify { width: 163px; }
.p-layer { width: 214px; }
.p-annot { width: 87px; }
.p-block { width: 80px; }
.p-props { width: 162px; }
.p-group { width: 84px; }
.p-util { width: 109px; }
.p-clip { width: 99px; border: 0; }
.rest { flex: 1; background: linear-gradient(#8c8c8c, #b4b4b4); }
.pbody { height: 81px; padding-top: 6px; display: flex; gap: 2px; }
.panel footer { height: 18px; background: #ebebeb; display: flex; align-items: center; justify-content: center; gap: 8px; color: #444; white-space: nowrap; }
.p-util footer, .p-block footer { gap: 6px; }
.p-props footer { position: relative; }
.launch { position: absolute; right: 3px; bottom: 5px; }
.big { flex-direction: column; justify-content: flex-start; height: 70px; }
.big span { margin-top: 6px; line-height: 16px; color: #444; }
.big .dn { margin-top: 4px; }
.big-a { font: 500 44px "Noto Sans", sans-serif; text-anchor: middle; fill: #383838; }
.w40 { width: 40px; margin-right: -2px; }
.w44 { width: 44px; }
.w48 { width: 46px; margin-left: -1px; }
.w48 + .col { margin-left: 1px; }
.w54 { width: 53px; }
.w62 { width: 77px; margin-right: -16px; }
.w64 { width: 64px; margin-right: -2px; }
.w68 { width: 70px; }
.p-block .w40 { margin-right: 0; }
.col { display: flex; flex-direction: column; align-items: flex-start; gap: 3px; }
.ib { width: 24px; height: 21px; border: 1px solid #c4c6c8; background: #f3f4f5; overflow: hidden; }
.ib.sp { width: 36px; justify-content: flex-start; }
.ib.sp svg { margin-left: -1px; border-right: 1px solid #c4c6c8; }
.ib.sp .dn { margin-left: 3px; }
.p-block .ib.sp .dn { margin-left: 2px; }
.ib.on { background: #8cbcec; border-color: #3a72ac; }
.mgrid { display: grid; grid-template-columns: 54px 24px 36px 24px; grid-auto-rows: 21px; gap: 3px 5px; }
.txt { gap: 4px; color: #444; justify-content: flex-start; padding-left: 2px; }
.stack { flex-direction: column; gap: 2px; padding-top: 5px; }
.p-layer { padding: 0 1px; }
.p-layer .stack { padding-top: 4px; }
.lrow { display: flex; justify-content: space-between; padding-right: 3px; height: 21px; }
.lrow .ib { background: #f8f9fa; }
.pair { display: flex; }
.combo { height: 23px; display: flex; align-items: center; border: 1px solid #c8c8c8; background: linear-gradient(#fafafa, #ececec); padding: 0 4px 0 2px; gap: 2px; min-width: 0; color: #333; }
.p-layer .combo { height: 24px; }
.layer { padding-left: 3px; gap: 3px; }
.layer .sw { margin: 0 3px; width: 14px; height: 14px; }
.sw { flex: none; width: 16px; height: 16px; border: 1px solid #111; background: #fff; }
.prow { display: flex; gap: 2px; align-items: center; }
.prow .combo { flex: 1; font-size: 13px; }
.prow .color { padding-left: 0; }
.ln { width: 62px; height: 1px; background: #222; margin-right: 2px; }
.p-props .prow:nth-child(3) .ln { width: 58px; margin-left: 4px; }

/* work area */
.work { flex: 1; min-height: 0; display: flex; background: #656565; padding-top: 5px; }
.dock { flex: none; width: 25px; padding: 4px 4px 5px 2px; display: flex; flex-direction: column; gap: 6px; }
.docked { flex: 1; display: flex; flex-direction: column; align-items: center; background: linear-gradient(90deg, #8b8b8b, #606060); border: 1px solid #444; color: #eee; }
.docked span { margin: auto 0; line-height: 18px; }
.docked span, .ptabs button { writing-mode: vertical-rl; text-orientation: sideways; transform: rotate(180deg); white-space: nowrap; }
.grip { width: 14px; height: 4px; background: repeating-linear-gradient(90deg, #222 0 1px, transparent 1px 2px); opacity: .7; }
.docked .grip { margin-top: 1px; }
.center { flex: 1; min-width: 0; display: flex; flex-direction: column; }
.doc { flex: 1; min-height: 0; display: flex; flex-direction: column; border: 2px solid #fff; border-left: 0; }
.filetabs { flex: none; padding-top: 2px; margin-right: 20px; border-bottom: 4px solid #fff; }
.filetabs button { height: 19px; width: 93px; background: #fff; border-radius: 3px 3px 0 0; font-size: 12px; color: #222; }
.canvas { flex: 1; min-height: 0; position: relative; background: #20272e; border: 2px solid #808080; border-width: 1px 0 0 2px; display: flex; justify-content: space-between; color: #eee; }
.drawing { position: absolute; inset: 0; }
.ucs { font: 300 18px Lato, sans-serif; fill: #fff; }
.viewlabel { position: relative; padding: 6px 4px; }
.viewtools { position: relative; width: 88px; display: flex; flex-direction: column; align-items: center; padding-top: 9px; }
.mdi { display: flex; gap: 8px; align-self: flex-end; margin-right: 9px; }
.cube { margin-top: 11px; margin-right: 8px; font-size: 11px; }
.cube text { text-anchor: middle; fill: #c8cacc; }
.cube .top { font-size: 17px; fill: #555; }
.wcs { margin: 10px 12px 0 0; width: 45px; height: 17px; border-radius: 4px; border: 1px solid #a8acb4; background: #8a8f9a; color: #d4d6da; font: 11px "Liberation Sans", sans-serif; gap: 4px; }
.layouts { flex: none; height: 14px; display: flex; background: #f0f0f0; padding-left: 2px; color: #222; }
.layouts button { width: 14px; border-right: 1px solid #bbb; }
.layouts .lt { width: auto; border: 0; background: #f8f8f8; margin-right: -1px; border-right: 1px solid #555; transform: skewX(-18deg); font-size: 10px; }
.layouts .sheet { padding: 0 9px; }
.layouts .lt span { transform: skewX(18deg); }
.layouts .model { transform: skewX(18deg); background: #20272e; color: #fff; margin-left: 5px; padding: 0 5px; border: 0; }
.layouts .model span { transform: skewX(-18deg); }
.cmd { flex: none; height: 66px; margin-top: 5px; display: flex; }
.cmdgrip { flex: none; width: 15px; background: #999; padding: 3px 1px; }
.cmdtext { flex: 1; background: #fdfdfd; color: #222; font: 20px/19px "Noto Sans CJK JP", sans-serif; font-feature-settings: "hwid"; font-weight: 300; border-radius: 3px 0 0 0; }
.hist { height: 46px; padding: 0 2px; border-bottom: 1px solid #888; }
.prompt { display: flex; padding: 0 2px; }
.prompt input { flex: 1; min-width: 0; }

/* tool palette */
.palette { flex: none; width: 186px; display: flex; padding: 2px 0 3px 5px; }
.ptabs { width: 24px; margin-top: 24px; display: flex; flex-direction: column; }
.ptabs button { width: 24px; height: 96px; background: #c8c8c8; border-top: 1px solid #444; border-radius: 0 3px 3px 0; color: #222; }
.ptabs .active { background: #eee; }
.pmain { flex: 1; display: flex; flex-direction: column; min-width: 0; }
.pmain h2 { flex: none; height: 22px; background: #969696; border-radius: 3px 3px 0 0; display: flex; align-items: center; gap: 5px; padding-left: 4px; color: #333; }
.vgrip { width: 3px; height: 12px; margin-bottom: 4px; background: repeating-linear-gradient(#333 0 1px, transparent 1px 2px); }
.plist { flex: 1; background: #eee; border-radius: 3px; padding: 9px 6px; display: flex; flex-direction: column; gap: 10px; color: #222; }
.plist button { justify-content: flex-start; gap: 4px; }
.tile-text { font: bold 7px "Liberation Sans", sans-serif; text-anchor: middle; }

/* status bar */
.status { flex: none; height: 23px; display: flex; background: linear-gradient(#7c7c7c, #686868); border-top: 1px solid #222; }
.coords { width: 185px; padding: 3px 11px; font: 11px/18px "Liberation Sans", sans-serif; color: #8e8e8e; }
.sgroup { display: flex; }
.sgroup button { width: 22px; background: #ababab; border-right: 1px solid #555; }
.sgroup .on { background: linear-gradient(#d4eef6, #8fcbe0); }
.right { margin-left: auto; }
.sgroup .stext { width: 32px; font-size: 10px; color: #111; }
.sgroup .sc { width: 50px; gap: 3px; font: 11px "Liberation Sans", sans-serif; }
.gap10 { width: 12px; }
.gap6 { width: 6px; }
.tray { width: 45px; margin: 1px 5px 3px 0; border: 1px solid #444; display: flex; align-items: center; justify-content: center; gap: 5px; background: #8e8e8e; }
.sgroup .narrow { width: 11px; }
.sizer { margin: 2px 0 0 3px; }
```
